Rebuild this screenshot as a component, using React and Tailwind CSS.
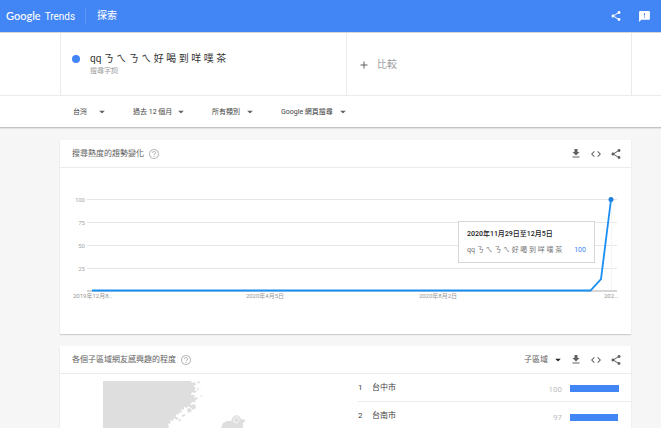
import React from "react";
import { MdShare, MdFeedback, MdFileDownload, MdCode, MdAdd, MdHelpOutline } from "react-icons/md";

const TERM = "qq ㄋ ㄟ ㄋ ㄟ 好 喝 到 咩 噗 茶";

function Caret({ className = "text-[#616161]" }) {
  return (
    <svg
      viewBox="0 0 6 3"
      aria-hidden="true"
      className={`pointer-events-none absolute right-0 top-1/2 h-[3px] w-[6px] -translate-y-1/2 ${className}`}
    >
      <path d="M0 0h6L3 3z" fill="currentColor" />
    </svg>
  );
}

function Dropdown({ label, value, width, text = "text-[7px] text-[#424242]", caret }) {
  return (
    <div className={`relative flex h-4 items-center ${width}`}>
      <select
        aria-label={label}
        className={`h-4 w-full cursor-pointer appearance-none bg-transparent p-0 leading-4 outline-none ${text}`}
      >
        <option>{value}</option>
      </select>
      <Caret className={caret} />
    </div>
  );
}

function CardActions() {
  return (
    <div className="flex items-center gap-2 text-[#616161]">
      <button aria-label="下載" className="flex h-3 w-3 items-center justify-center">
        <MdFileDownload size={13} />
      </button>
      <button aria-label="嵌入" className="flex h-3 w-3 items-center justify-center">
        <MdCode size={12} />
      </button>
      <button aria-label="分享" className="flex h-3 w-3 items-center justify-center">
        <MdShare size={12} />
      </button>
    </div>
  );
}

function CardHeader({ title, children }) {
  return (
    <div className="flex h-7 items-center border-b border-[#ebebeb] pl-3 pr-[9px]">
      <h2 className="text-[8px] leading-4 text-[#616161]">{title}</h2>
      <button aria-label="說明" className="ml-1 flex text-[#bdbdbd]">
        <MdHelpOutline size={12} />
      </button>
      <div className="ml-auto flex items-center">{children}</div>
    </div>
  );
}

const GRID = [
  { label: "100", y: 31 },
  { label: "75", y: 54 },
  { label: "50", y: 77 },
  { label: "25", y: 100 },
];

function TrendChart() {
  return (
    <div className="relative">
      <svg viewBox="0 0 571 166" className="block w-full" role="img" aria-label="搜尋熱度的趨勢變化">
        {GRID.map((g) => (
          <g key={g.label}>
            <rect x="27" y={g.y} width="530" height="1" fill="#e6e6e6" />
            <text x="25" y={g.y + 3} textAnchor="end" fontSize="6" fill="#a8a8a8">
              {g.label}
            </text>
          </g>
        ))}
        <rect x="551" y="31" width="1" height="92" fill="#f5f5f5" />
        <rect x="27" y="122" width="530" height="2" fill="#d6d6d6" />
        <path d="M32 122.5H530.5L541 111L551 31.5" fill="none" stroke="#1a8ff2" strokeWidth="1.8" />
        <circle cx="551" cy="31.5" r="2.5" fill="#1f82e0" />
        <g fontSize="6" fill="#969696">
          <text x="13" y="130">2019年12月8…</text>
          <text x="205" y="130" textAnchor="middle">2020年4月5日</text>
          <text x="378" y="130" textAnchor="middle">2020年8月2日</text>
          <text x="544" y="130">202…</text>
        </g>
      </svg>
      <div className="absolute right-9 top-[53px] flex h-[42px] w-[137px] flex-col justify-center gap-1 border border-[#d6d6d6] bg-white px-2 text-[7px] leading-3">
        <p className="font-medium text-[#212121]">2020年11月29日至12月5日</p>
        <p className="flex justify-between whitespace-nowrap text-[#757575]">
          <span>{TERM}</span>
          <span className="text-[#4285f4]">100</span>
        </p>
      </div>
    </div>
  );
}

function RegionMap() {
  return (
    <svg viewBox="0 0 160 47" className="mt-[7px] ml-[43px] h-[47px] w-[160px]" role="img" aria-label="台灣地圖">
      <path
        fill="#dedede"
        d="M0 0H88l1 2 3-1 1 3-3 1 3 2-2 2 3 1-2 2-3-1-1 3 4 0-1 3 3-1 1 2-3 1 1 2-4 0-2 3 3 1-2 2-3-2-1 2-3-1 0 3-3-1 1 3-3 1-1 2-2-1 0 3 3 1-2 2-3-2-1 3-3-1 1 3-3 1 1 3-2 2H0z"
      />
      <path
        fill="#dedede"
        d="M94 1l3-1-1 3zM97 15l2-1 0 2zM98 5l1 0 0 1zM88 24l4-1 1 4-3 2-2-2zM84 28l3-1 2 3-4 2zM79 34l3-1 0 2-3 1zM75 39l3-1-1 3zM95 6l1 3-2 0z"
      />
      <path fill="#dedede" d="M118 47l2-5 4-2 4 0 2-4 3-2 3 1 2 3 5 1-3 3 0 5z" />
      <path fill="none" stroke="#f7f7f7" strokeWidth="1" d="M133 36l-2 2 0 3 3 1 2-3-1-3z" />
    </svg>
  );
}

const REGIONS = [
  { name: "台中市", value: 100 },
  { name: "台南市", value: 97 },
];

function RegionList() {
  return (
    <ol className="min-w-0">
      {REGIONS.map((r, i) => (
        <li
          key={r.name}
          className="flex h-7 items-center border-b border-[#ebebeb] text-[8px] leading-4 text-[#424242] last:border-b-0"
        >
          <span className="w-[14px]">{i + 1}</span>
          <span>{r.name}</span>
          <span className="ml-auto pt-1 text-[#bdbdbd]">{r.value}</span>
          <span className="ml-2 mr-3 flex w-[49px] pt-0.5">
            <span className="h-[7px] bg-[#4285f4]" style={{ width: `${r.value}%` }} />
          </span>
        </li>
      ))}
    </ol>
  );
}

export default function App() {
  return (
    <div className="h-screen overflow-y-auto bg-[#f6f6f6] font-['Roboto','Noto_Sans_CJK_TC',sans-serif] [scrollbar-width:none]">
      <header className="flex h-8 items-center bg-[#4285f4] pl-1.5 pr-[10px] text-white">
        <a href="#" className="flex w-[79px] items-baseline gap-1 leading-4">
          <span className="font-['Lato',sans-serif] text-[11px] font-medium">Google</span>
          <span className="text-[10px]">Trends</span>
        </a>
        <span className="h-4 w-px bg-[#5c97f7]" />
        <h1 className="ml-[11px] text-[10px] leading-4">探索</h1>
        <div className="ml-auto flex items-center gap-4">
          <button aria-label="分享" className="flex">
            <MdShare size={12} />
          </button>
          <button aria-label="提供意見" className="flex">
            <MdFeedback size={13} />
          </button>
        </div>
      </header>

      <section className="border-y border-t-[#d6d6d6] border-b-[#c4c4c4] bg-white shadow-[0_1px_0_#e2e2e2]">
        <div className="border-b border-[#ebebeb] pl-[60px] pr-[29px]">
          <div className="grid h-[62px] grid-cols-2 border-x border-[#ebebeb]">
            <div className="flex pl-[11px] pt-[22px]">
              <span className="h-2 w-2 rounded-full bg-[#4285f4]" />
              <div className="ml-2.5 -mt-1 flex min-w-0 flex-1 flex-col">
                <input
                  id="term"
                  defaultValue={TERM}
                  className="h-4 w-full bg-transparent p-0 text-[10px] leading-4 text-[#333333] outline-none"
                />
                <label htmlFor="term" className="-mt-0.5 text-[7px] leading-3 text-[#9e9e9e]">
                  搜尋字詞
                </label>
              </div>
            </div>
            <button className="flex items-center border-l border-[#ebebeb] pl-[11px] pt-0.5 text-[10px] leading-4 text-[#9e9e9e]">
              <MdAdd size={12} className="text-[#616161]" />
              <span className="ml-[7px]">比較</span>
            </button>
          </div>
        </div>
        <div className="flex h-[31px] items-center gap-7 pl-[73px]">
          <Dropdown label="地區" value="台灣" width="w-[32px]" />
          <Dropdown label="時間" value="過去 12 個月" width="w-[51px]" />
          <Dropdown label="類別" value="所有類別" width="w-[41px]" />
          <Dropdown label="搜尋類型" value="Google 網頁搜尋" width="w-[65px]" />
        </div>
      </section>

      <main className="flex flex-col gap-3 pl-[60px] pr-[30px] pt-3">
        <section className="bg-white shadow-[0_1px_1px_rgba(0,0,0,0.16)]">
          <CardHeader title="搜尋熱度的趨勢變化">
            <CardActions />
          </CardHeader>
          <TrendChart />
        </section>

        <section className="bg-white shadow-[0_1px_1px_rgba(0,0,0,0.16)]">
          <CardHeader title="各個子區域網友感興趣的程度">
            <div className="mr-[9px]">
              <Dropdown
                label="區域層級"
                value="子區域"
                width="w-[37px]"
                text="text-[8px] text-[#616161]"
                caret="text-[#212121]"
              />
            </div>
            <CardActions />
          </CardHeader>
          <div className="grid grid-cols-[298px_1fr]">
            <RegionMap />
            <RegionList />
          </div>
        </section>
      </main>
    </div>
  );
}
